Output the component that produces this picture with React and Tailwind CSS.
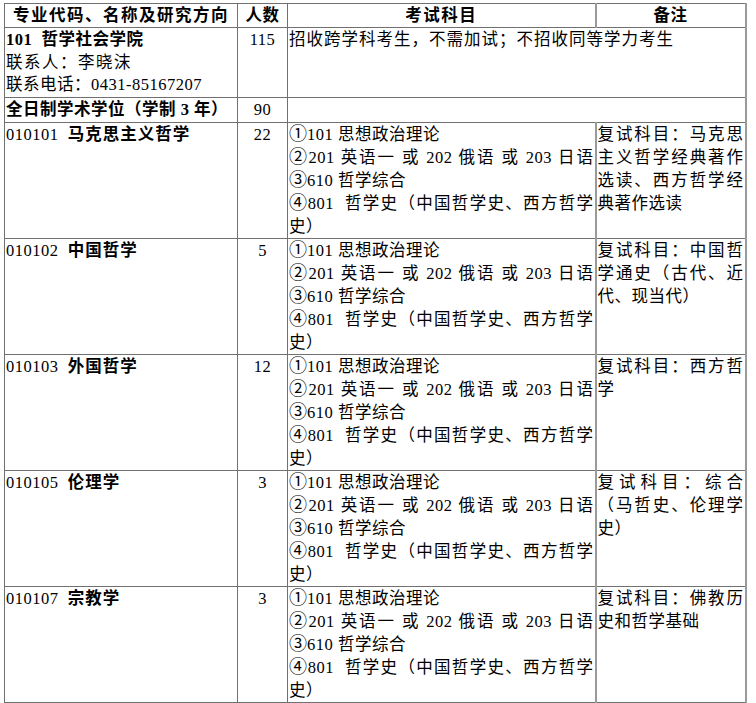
const font = { fontFamily: '"Liberation Serif", "Noto Sans CJK SC", serif' };
const cjk = { fontFamily: '"Noto Sans CJK SC", sans-serif' };

const subjects = [
  { c: "①", t: "101 思想政治理论" },
  { c: "②", t: "201 英语一 或 202 俄语 或 203 日语", j: true },
  { c: "③", t: "610 哲学综合" },
  { c: "④", t: "801  哲学史（中国哲学史、西方哲学", j: true },
  { t: "史）" },
];

const programs = [
  {
    code: "010101",
    name: "马克思主义哲学",
    n: "22",
    note: [
      { t: "复试科目：马克思", j: true },
      { t: "主义哲学经典著作", j: true },
      { t: "选读、西方哲学经", j: true },
      { t: "典著作选读" },
    ],
  },
  {
    code: "010102",
    name: "中国哲学",
    n: "5",
    note: [
      { t: "复试科目：中国哲", j: true },
      { t: "学通史（古代、近", j: true },
      { t: "代、现当代）" },
    ],
  },
  {
    code: "010103",
    name: "外国哲学",
    n: "12",
    note: [{ t: "复试科目：西方哲", j: true }, { t: "学" }],
  },
  {
    code: "010105",
    name: "伦理学",
    n: "3",
    note: [
      { t: "复试科目：综合", j: true },
      { t: "（马哲史、伦理学", j: true },
      { t: "史）" },
    ],
  },
  {
    code: "010107",
    name: "宗教学",
    n: "3",
    note: [{ t: "复试科目：佛教历", j: true }, { t: "史和哲学基础" }],
  },
];

function Lines({ items }) {
  return items.map((l, i) => (
    <div
      key={i}
      className={
        l.j
          ? "h-[23px] text-justify [text-align-last:justify] whitespace-pre"
          : "h-[23px] whitespace-pre"
      }
    >
      {l.c && (
        <span style={cjk} className="text-[18px] leading-none tracking-normal">
          {l.c}
        </span>
      )}
      {l.t}
    </div>
  ));
}

const cell = "border border-[#707070] align-top p-0";
const numCell = "border border-[#707070] align-top text-center p-0";

export default function App() {
  return (
    <div className="bg-white w-[756px] h-[703px] overflow-hidden pt-[3px] pl-[4px]" style={font}>
      <table className="table-fixed border-collapse text-[16.5px] leading-[23px] tracking-[0.5px] text-black w-[741px]">
        <colgroup>
          <col className="w-[233px]" />
          <col className="w-[50px]" />
          <col className="w-[308px]" />
          <col className="w-[150px]" />
        </colgroup>
        <tbody>
          <tr className="h-[24px]">
            <td className="border border-[#707070] text-center font-bold p-0 tracking-[1.5px]">专业代码、名称及研究方向</td>
            <td className="border border-[#707070] text-center font-bold p-0">人数</td>
            <td className="border border-[#707070] text-center font-bold p-0 tracking-[1.5px]">考试科目</td>
            <td className="border border-[#707070] border-l-2 border-l-[#9a9a9a] border-r-2 border-r-[#9a9a9a] text-center font-bold p-0">备注</td>
          </tr>
          <tr className="h-[70px]">
            <td className={`${cell} pl-[1px] pt-[1px] leading-[22.5px]`}>
              <div className="font-bold whitespace-pre">101  哲学社会学院</div>
              <div className="tracking-[1.5px]">联系人：李晓沫</div>
              <div>联系电话：0431-85167207</div>
            </td>
            <td className={`${numCell} pt-[1px] leading-[22.5px]`}>115</td>
            <td colSpan={2} className={`${cell} border-r-2 border-r-[#9a9a9a] pl-[1px] pt-[1px] leading-[22.5px] tracking-[1px]`}>
              招收跨学科考生，不需加试；不招收同等学力考生
            </td>
          </tr>
          <tr className="h-[25px]">
            <td className={`${cell} pl-[1px] font-bold`}>全日制学术学位（学制 3 年）</td>
            <td className={numCell}>90</td>
            <td colSpan={2} className={`${cell} border-r-2 border-r-[#9a9a9a]`}></td>
          </tr>
          {programs.map((p) => (
            <tr key={p.code} className="h-[116px]">
              <td className={`${cell} pl-[1px] whitespace-pre`}>
                {p.code}  <span className="font-bold tracking-[1px]">{p.name}</span>
              </td>
              <td className={numCell}>{p.n}</td>
              <td className={`${cell} pl-[1px] pr-[1px]`}>
                <Lines items={subjects} />
              </td>
              <td className={`${cell} border-l-2 border-l-[#9a9a9a] border-r-2 border-r-[#9a9a9a] pl-[1px] pr-[1px]`}>
                <Lines items={p.note} />
              </td>
            </tr>
          ))}
        </tbody>
      </table>
    </div>
  );
}
